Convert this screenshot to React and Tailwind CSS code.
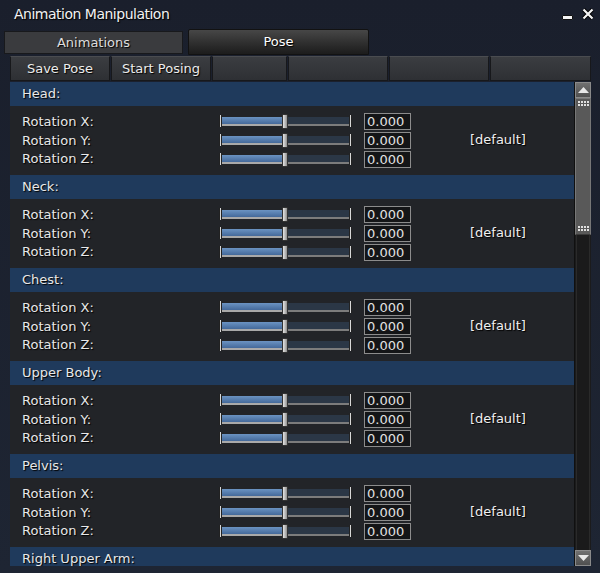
import React from "react";

const sections = ["Head", "Neck", "Chest", "Upper Body", "Pelvis"];
const axes = [
  ["X", "h-[19px]"],
  ["Y", "h-[19px]"],
  ["Z", "h-[18px]"],
];

const shadow = "[text-shadow:1px_1px_1px_#000]";

function Slider() {
  return (
    <div className="relative h-[15px] w-[133px]">
      <div className="absolute left-0 top-[1px] h-[12px] w-[3px] bg-[#d8d8d8] border-x border-[#222]" />
      <div className="absolute left-[3px] right-[3px] top-[3px] h-[9px] bg-[#2b3746] border-b-2 border-[#7c7c7c]" />
      <div className="absolute left-[3px] top-[3px] h-[7px] w-[61px] bg-gradient-to-b from-[#6b93c2] to-[#44699a]" />
      <div className="absolute left-[3px] top-[10px] h-[2px] w-[61px] bg-[#a9a9a9]" />
      <div className="absolute right-0 top-[1px] h-[12px] w-[3px] bg-[#d8d8d8] border-x border-[#222]" />
      <div className="absolute left-[63px] top-0 h-[15px] w-[6px] rounded-[1px] bg-gradient-to-r from-[#e4e4e4] via-[#bdbdbd] to-[#8f8f8f] border border-[#333]" />
    </div>
  );
}

function Header({ name }) {
  return (
    <div className={`h-[24px] shrink-0 bg-[#1f3a5c] pl-[12px] flex items-center text-[13px] text-[#e8e8e8] ${shadow}`}>
      {name}:
    </div>
  );
}

function Section({ name }) {
  return (
    <div className="shrink-0">
      <Header name={name} />
      <div className="flex pt-[6px] pb-[7px]">
        <div className="flex flex-col">
          {axes.map(([a, h]) => (
            <div key={a} className={`${h} flex items-center`}>
              <div className={`w-[209px] pl-[12px] text-[13px] text-[#e8e8e8] ${shadow}`}>
                Rotation {a}:
              </div>
              <Slider />
              <div className="ml-[12px] h-[17px] w-[47px] border border-[#8c8c8c] bg-[#141517] pl-[2px] text-[13px] leading-[15px] text-[#e2e2e2]">
                0.000
              </div>
            </div>
          ))}
        </div>
        <div className={`ml-[59px] flex items-center text-[13px] text-[#f0f0f0] ${shadow}`}>
          [default]
        </div>
      </div>
    </div>
  );
}

function Grip() {
  return (
    <svg width="11" height="6" viewBox="0 0 11 6">
      {[0, 1].map((r) =>
        [0, 1, 2, 3].map((c) => (
          <rect key={`${r}-${c}`} x={c * 3} y={r * 3} width="2" height="2" fill="#e0e0e0" />
        ))
      )}
    </svg>
  );
}

export default function App() {
  return (
    <div
      className="w-[600px] h-[573px] overflow-hidden bg-gradient-to-b from-[#1a1f2c] to-[#1e2533] flex flex-col"
      style={{ fontFamily: '"DejaVu Sans", Verdana, sans-serif' }}
    >
      {/* Title bar */}
      <div className="h-[29px] flex items-center pl-[14px] pr-[6px] shrink-0">
        <div className={`text-[14px] tracking-[-0.5px] text-[#f2f2f2] ${shadow}`}>
          Animation Manipulation
        </div>
        <div className="ml-auto flex items-center gap-[9px]">
          <div className="mt-[6px] h-[5px] w-[11px] rounded-[1px] bg-[#f4f4f4] border border-[#111]" />
          <svg width="12" height="12" viewBox="0 0 12 12" className="mb-[2px]">
            <path d="M1.5 1.5 L10.5 10.5 M10.5 1.5 L1.5 10.5" stroke="#000" strokeWidth="4" />
            <path d="M1.5 1.5 L10.5 10.5 M10.5 1.5 L1.5 10.5" stroke="#f4f4f4" strokeWidth="2.2" />
          </svg>
        </div>
      </div>

      {/* Tabs */}
      <div className="flex items-end pl-[4px] gap-[5px] h-[26px] shrink-0">
        <div className={`mb-[1px] h-[23px] w-[179px] flex items-center justify-center bg-[#3a3b3e] border border-[#18191c] text-[13px] text-[#dedede] ${shadow}`}>
          Animations
        </div>
        <div className={`h-[26px] w-[181px] flex items-center justify-center bg-gradient-to-b from-[#474747] to-[#1c1c1c] border border-[#121212] rounded-t-[2px] text-[13px] text-white ${shadow}`}>
          Pose
        </div>
      </div>

      {/* Button row */}
      <div className="flex gap-[1px] pl-[10px] mt-[1px] h-[25px] shrink-0">
        {[
          ["Save Pose", 100],
          ["Start Posing", 100],
          ["", 75],
          ["", 100],
          ["", 100],
          ["", 101],
        ].map(([t, w], i) => (
          <div
            key={i}
            style={{ width: w }}
            className={`h-full flex items-center justify-center bg-gradient-to-b from-[#3b3d41] to-[#2e3034] border border-[#17181b] border-t-[#4a4c50] text-[13px] text-[#ececec] ${shadow}`}
          >
            {t}
          </div>
        ))}
      </div>

      {/* Content */}
      <div className="mt-[1px] ml-[10px] w-[581px] h-[484px] flex bg-[#222428] shrink-0">
        <div className="w-[564px] h-full overflow-hidden flex flex-col">
          {sections.map((s) => (
            <Section key={s} name={s} />
          ))}
          <Header name="Right Upper Arm" />
        </div>
        {/* Scrollbar */}
        <div className="w-[17px] h-full flex flex-col bg-[#1b1b1c] border-l border-[#101010]">
          <div className="h-[16px] flex items-center justify-center bg-gradient-to-b from-[#707070] to-[#505050] border border-[#8a8a8a]">
            <svg width="11" height="6" viewBox="0 0 11 6">
              <path d="M0 6 L5.5 0 L11 6 Z" fill="#e8e8e8" />
            </svg>
          </div>
          <div className="h-[137px] flex flex-col justify-between items-center py-[2px] bg-[#595959] border border-[#777] border-b-[#3a3a3a]">
            <Grip />
            <Grip />
          </div>
          <div className="flex-1 mx-[1px] border-x border-[#2a2a2a] bg-[#1a1a1b]" />
          <div className="h-[16px] flex items-center justify-center bg-gradient-to-b from-[#707070] to-[#505050] border border-[#8a8a8a]">
            <svg width="11" height="6" viewBox="0 0 11 6">
              <path d="M0 0 L11 0 L5.5 6 Z" fill="#e8e8e8" />
            </svg>
          </div>
        </div>
      </div>
    </div>
  );
}
